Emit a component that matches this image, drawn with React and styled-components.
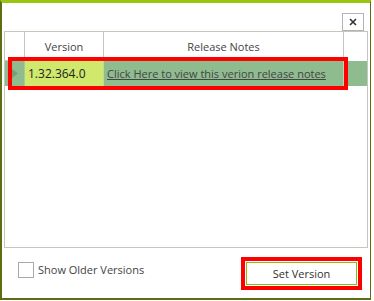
import React from 'react'
import styled, { createGlobalStyle } from 'styled-components'

const Global = createGlobalStyle`
    html, body {
        margin: 0;
        padding: 0;
        background: #ffffff;
    }
    body {
        font-family: "Open Sans", "Noto Sans", sans-serif;
        color: #444444;
    }
`

const Window = styled.div`
    width: 371px;
    height: 300px;
    box-sizing: border-box;
    border-top: 3px solid #97c70e;
    border-left: 2px solid #5b6f12;
    border-right: 1px solid #5b6f12;
    border-bottom: 2px solid #5b6f12;
    display: flex;
    flex-direction: column;
    background: #ffffff;
`
const TitleBar = styled.div`
    height: 28px;
    flex-shrink: 0;
    box-sizing: border-box;
    padding: 10px 6px 0 0;
    display: flex;
    justify-content: flex-end;
    align-items: flex-start;
`
const CloseButton = styled.button`
    width: 22px;
    height: 18px;
    box-sizing: border-box;
    border: 1px solid #b4b4b4;
    background: #ffffff;
    padding: 0;
    display: flex;
    align-items: center;
    justify-content: center;
    color: #333333;
    cursor: pointer;
`
const Grid = styled.div`
    margin-left: 2px;
    width: 364px;
    height: 217px;
    flex-shrink: 0;
    box-sizing: border-box;
    border: 1px solid #c6c6bc;
    display: flex;
    flex-direction: column;
`
const HeaderRow = styled.div`
    display: flex;
    height: 29px;
`
const HeaderCell = styled.div`
    width: ${props => props.w}px;
    flex-shrink: 0;
    border-right: 1px solid #c6c6bc;
    border-bottom: 1px solid #c6c6bc;
    display: flex;
    align-items: center;
    justify-content: center;
    font-size: 11px;
    color: #444444;
    padding-top: 1px;
`
const HeaderFill = styled.div`
    flex: 1;
`
const DataRow = styled.div`
    position: relative;
    display: flex;
    height: 25px;
    background: #8fbc8f;
`
const RowHead = styled.div`
    width: 19px;
    flex-shrink: 0;
    border-right: 1px solid #a6c9a0;
    display: flex;
    align-items: center;
    justify-content: center;
`
const Cell = styled.div`
    width: ${props => props.w}px;
    flex-shrink: 0;
    box-sizing: border-box;
    border-right: 1px solid ${props => props.line || '#b9d6b6'};
    background: ${props => props.bg || 'transparent'};
    display: flex;
    align-items: center;
    padding-left: 3px;
    font-size: 11px;
    white-space: nowrap;
    overflow: hidden;
`
const VersionText = styled.span`
    color: #222222;
    font-size: 12px;
`
const NotesLink = styled.a`
    color: #444444;
    text-decoration: underline;
    cursor: pointer;
`
const Highlight = styled.div`
    position: absolute;
    left: 3px;
    top: -4px;
    width: 340px;
    height: 33px;
    box-sizing: border-box;
    border: 4px solid #ff0000;
    pointer-events: none;
`
const Footer = styled.div`
    flex: 1;
    display: flex;
    align-items: center;
    justify-content: space-between;
    padding: 0 8px 0 16px;
`
const CheckRow = styled.label`
    display: flex;
    align-items: center;
    gap: 4px;
    margin-bottom: 7px;
    font-size: 11px;
    color: #444444;
`
const Box = styled.span`
    width: 16px;
    height: 16px;
    box-sizing: border-box;
    border: 1px solid #a8a8a8;
    background: #ffffff;
`
const RedFrame = styled.div`
    border: 4px solid #ff0000;
    padding: 1px;
    display: flex;
`
const SetButton = styled.button`
    width: 111px;
    height: 23px;
    box-sizing: border-box;
    border: 1px solid #8cbb1a;
    background: #ffffff;
    font-family: "Open Sans", "Noto Sans", sans-serif;
    font-size: 11px;
    color: #333333;
    padding: 0;
    cursor: pointer;
`

const App = () => {
    return (
        <>
            <Global />
            <Window>
                <TitleBar>
                    <CloseButton>
                        <svg width="8" height="8" viewBox="0 0 8 8">
                            <path d="M1 1L7 7M7 1L1 7" stroke="#333" strokeWidth="1.6" />
                        </svg>
                    </CloseButton>
                </TitleBar>
                <Grid>
                    <HeaderRow>
                        <HeaderCell w={19} />
                        <HeaderCell w={78}>Version</HeaderCell>
                        <HeaderCell w={239}>Release Notes</HeaderCell>
                        <HeaderFill />
                    </HeaderRow>
                    <DataRow>
                        <RowHead>
                            <svg width="6" height="9" viewBox="0 0 6 9">
                                <path d="M0 0L6 4.5L0 9Z" fill="#7c9c78" />
                            </svg>
                        </RowHead>
                        <Cell w={79} bg="#d0e86c" line="#c2da98">
                            <VersionText>1.32.364.0</VersionText>
                        </Cell>
                        <Cell w={240}>
                            <NotesLink>Click Here to view this verion release notes</NotesLink>
                        </Cell>
                        <Highlight />
                    </DataRow>
                </Grid>
                <Footer>
                    <CheckRow>
                        <Box />
                        Show Older Versions
                    </CheckRow>
                    <RedFrame>
                        <SetButton>Set Version</SetButton>
                    </RedFrame>
                </Footer>
            </Window>
        </>
    )
}

export default App
